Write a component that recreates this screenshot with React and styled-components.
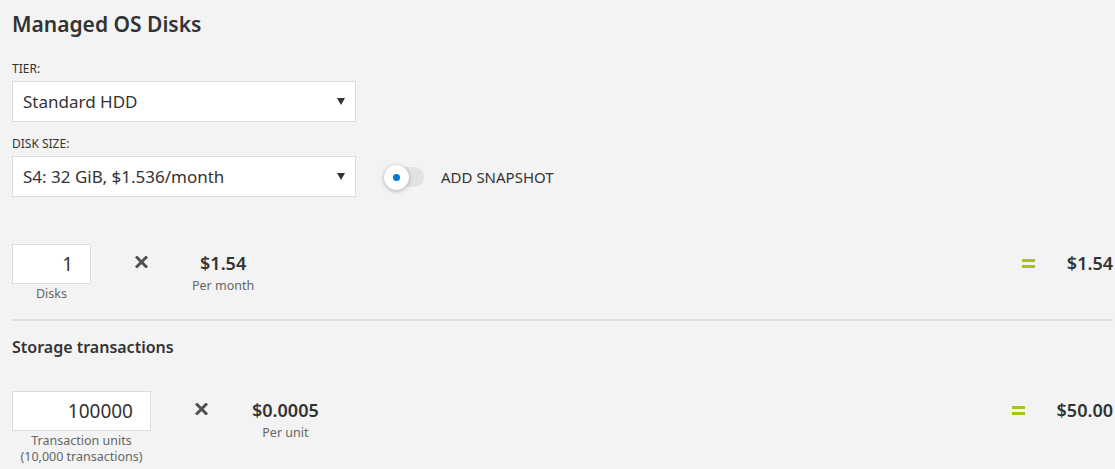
import React from "react";
import styled, { createGlobalStyle } from "styled-components";

const GlobalStyle = createGlobalStyle`
  html, body {
    margin: 0;
    background: #f3f3f3;
  }
  body {
    font-family: "Noto Sans", "Open Sans", sans-serif;
    color: #333;
  }
`;

const Page = styled.div`
  padding: 8px 2px 0 12px;
`;

const Title = styled.h2`
  margin: 0 0 21px;
  font-size: 21px;
  font-weight: 600;
  line-height: 32px;
  color: #333;
`;

const FieldLabel = styled.div`
  font-size: 12px;
  line-height: 16px;
  margin-bottom: 4px;
  text-transform: uppercase;
`;

const FieldRow = styled.div`
  display: flex;
  align-items: center;
  gap: 28px;
  margin-bottom: 14px;
`;

const Select = styled.div`
  box-sizing: border-box;
  width: 344px;
  height: 41px;
  background: #fff;
  border: 1px solid #dcdcdc;
  display: flex;
  align-items: center;
  justify-content: space-between;
  padding: 0 10px 0 10px;
  font-size: 17px;
  color: #333;
`;

const Arrow = () => (
  <svg width="8" height="7" viewBox="0 0 8 7">
    <path d="M0 0 H8 L4 7 Z" fill="#333" />
  </svg>
);

const Toggle = styled.div`
  display: flex;
  align-items: center;
  gap: 17px;
  font-size: 15px;
  color: #333;
`;

const Track = styled.div`
  position: relative;
  width: 40px;
  height: 20px;
  border-radius: 10px;
  background: #e3e3e3;
`;

const Knob = styled.div`
  position: absolute;
  left: 0;
  top: -2px;
  width: 25px;
  height: 25px;
  border-radius: 50%;
  background: #fff;
  box-shadow: 0 1px 4px rgba(0, 0, 0, 0.3);
  display: flex;
  align-items: center;
  justify-content: center;

  &::after {
    content: "";
    width: 7px;
    height: 7px;
    border-radius: 50%;
    background: #0078d4;
  }
`;

const CalcRow = styled.div`
  display: flex;
  align-items: flex-start;
  margin-top: ${(p) => p.$top}px;
`;

const InputCol = styled.div`
  display: flex;
  flex-direction: column;
  align-items: center;
  width: ${(p) => p.$width}px;
`;

const NumberBox = styled.div`
  box-sizing: border-box;
  width: 100%;
  height: 40px;
  background: #fff;
  border: 1px solid #dcdcdc;
  display: flex;
  align-items: center;
  justify-content: flex-end;
  padding-right: 17px;
  font-size: 19px;
  color: #333;
`;

const SubLabel = styled.div`
  font-size: 12.5px;
  line-height: 16px;
  color: #666;
  text-align: center;
  margin-top: ${(p) => p.$gap || 2}px;
`;

const Times = styled.div`
  margin: 12px 44px 0 44px;
  width: 13px;
  height: 12px;
  display: flex;
`;

const PriceCol = styled.div`
  display: flex;
  flex-direction: column;
  align-items: center;
  margin-top: 7px;
`;

const Price = styled.div`
  font-size: 18px;
  font-weight: 600;
  line-height: 24px;
  color: #333;
`;

const Total = styled.div`
  margin-left: auto;
  margin-top: 7px;
  display: flex;
  align-items: center;
  gap: 32px;
  height: 24px;
  font-size: 18px;
  font-weight: 600;
  color: #333;
`;

const Equals = styled.div`
  width: 13px;
  height: 9px;
  border-top: 3px solid #a3c614;
  border-bottom: 3px solid #a3c614;
  box-sizing: border-box;
`;

const Divider = styled.hr`
  margin: 17px 0 0;
  border: none;
  height: 2px;
  background: #dedede;
`;

const SectionTitle = styled.h3`
  margin: 15px 0 0;
  font-size: 16px;
  font-weight: 600;
  line-height: 22px;
  color: #333;
`;

const TimesIcon = () => (
  <svg width="13" height="12" viewBox="0 0 13 12">
    <path d="M1 0.5 L12 11.5 M12 0.5 L1 11.5" stroke="#505050" strokeWidth="3" />
  </svg>
);

const CalcLine = ({ top, width, value, label, price, per, total }) => (
  <CalcRow $top={top}>
    <InputCol $width={width}>
      <NumberBox>{value}</NumberBox>
      <SubLabel>{label}</SubLabel>
    </InputCol>
    <Times>
      <TimesIcon />
    </Times>
    <PriceCol>
      <Price>{price}</Price>
      <SubLabel $gap={3}>{per}</SubLabel>
    </PriceCol>
    <Total>
      <Equals />
      <span>{total}</span>
    </Total>
  </CalcRow>
);

export default function App() {
  return (
    <Page>
      <GlobalStyle />
      <Title>Managed OS Disks</Title>
      <FieldLabel>Tier:</FieldLabel>
      <FieldRow>
        <Select>
          <span>Standard HDD</span>
          <Arrow />
        </Select>
      </FieldRow>
      <FieldLabel>Disk size:</FieldLabel>
      <FieldRow>
        <Select>
          <span>S4: 32 GiB, $1.536/month</span>
          <Arrow />
        </Select>
        <Toggle>
          <Track>
            <Knob />
          </Track>
          <span>ADD SNAPSHOT</span>
        </Toggle>
      </FieldRow>
      <CalcLine
        top={47}
        width={79}
        value="1"
        label="Disks"
        price="$1.54"
        per="Per month"
        total="$1.54"
      />
      <Divider />
      <SectionTitle>Storage transactions</SectionTitle>
      <CalcLine
        top={33}
        width={139}
        value="100000"
        label={
          <>
            Transaction units
            <br />
            (10,000 transactions)
          </>
        }
        price="$0.0005"
        per="Per unit"
        total="$50.00"
      />
    </Page>
  );
}
